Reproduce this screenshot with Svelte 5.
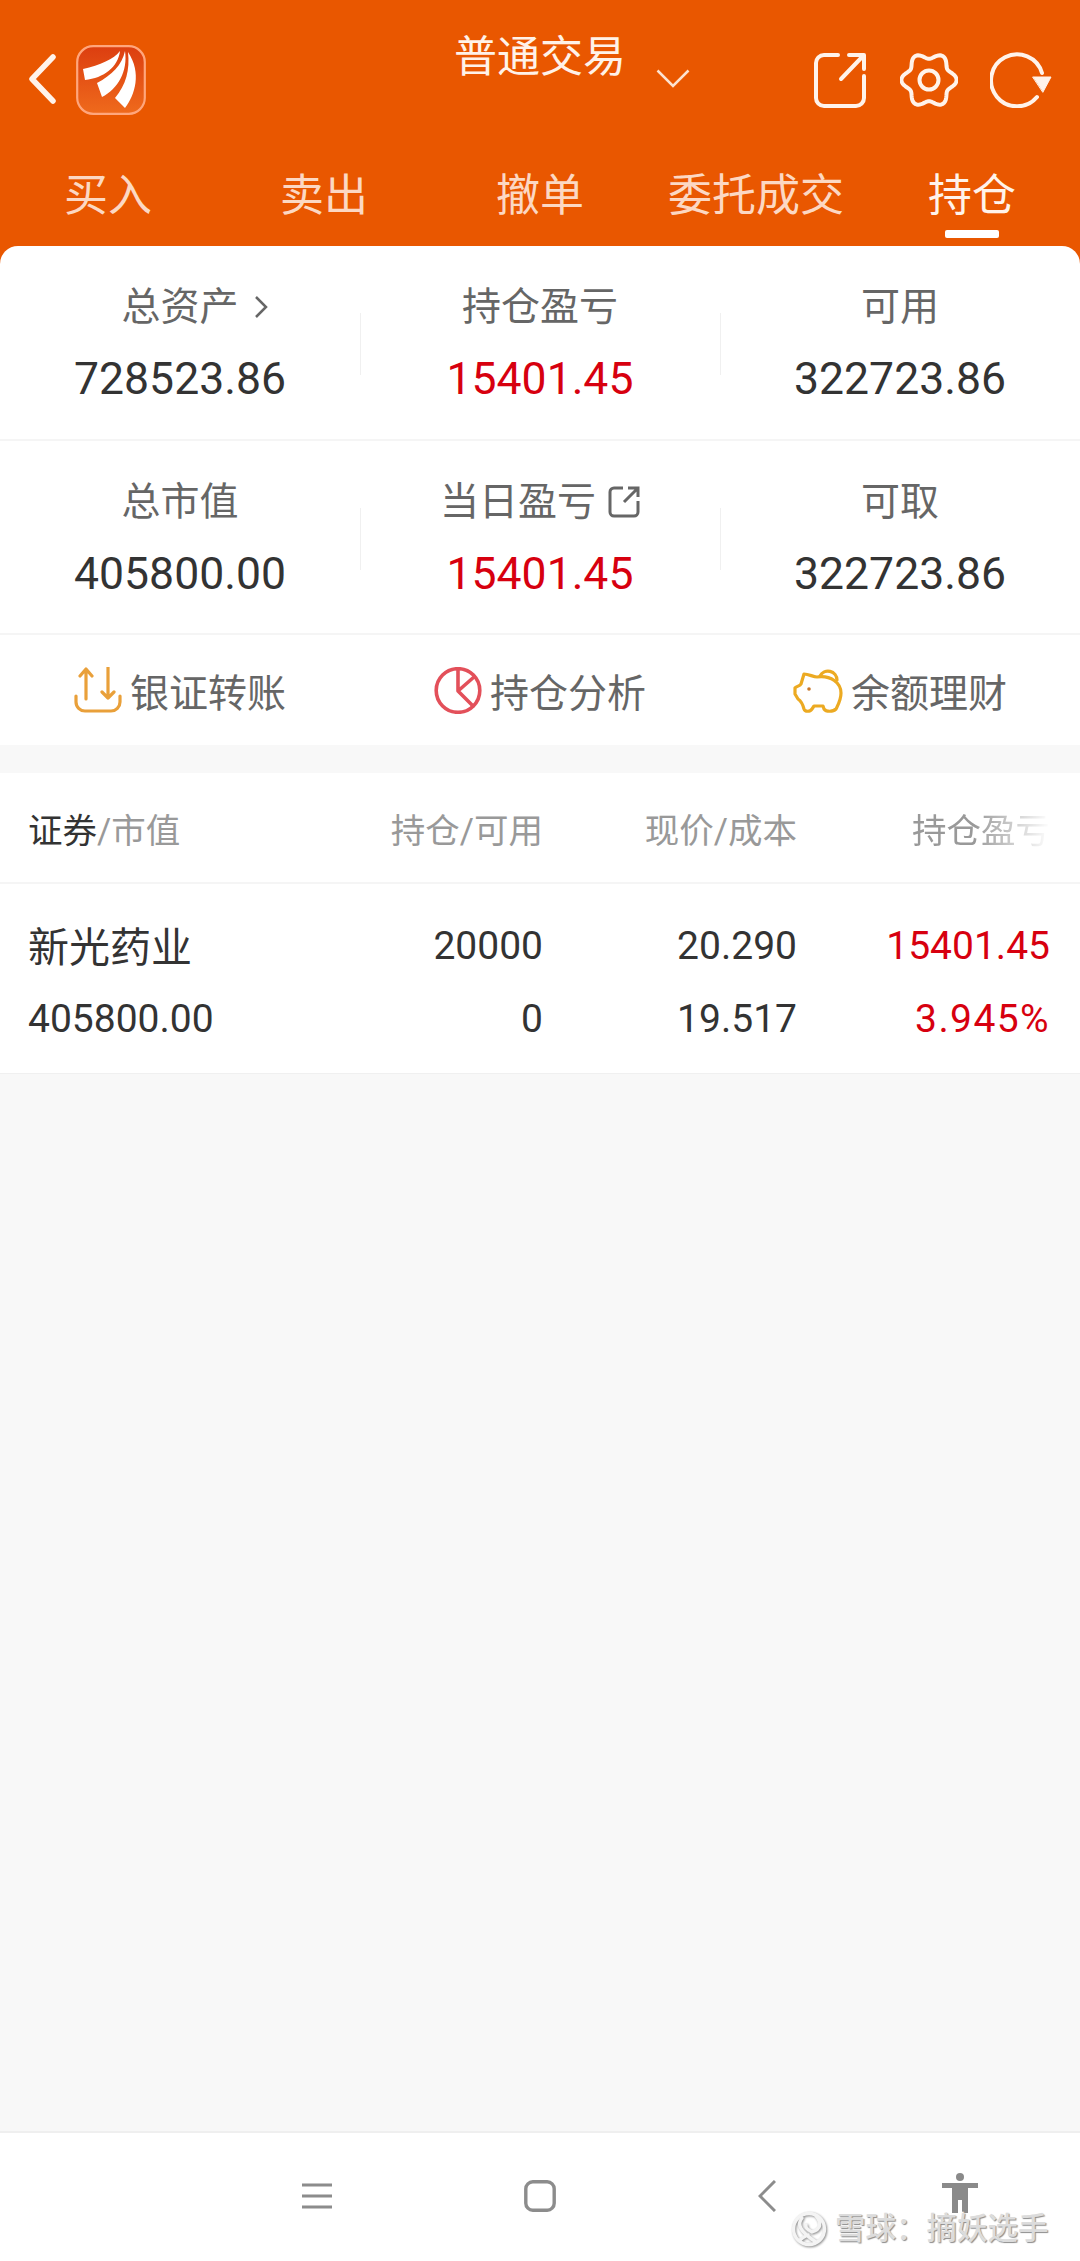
<script>
	const tabs = ['买入', '卖出', '撤单', '委托成交', '持仓'];
	const summary = [
		[
			{ label: '总资产', value: '728523.86', more: true },
			{ label: '持仓盈亏', value: '15401.45', red: true },
			{ label: '可用', value: '322723.86' }
		],
		[
			{ label: '总市值', value: '405800.00' },
			{ label: '当日盈亏', value: '15401.45', red: true, link: true },
			{ label: '可取', value: '322723.86' }
		]
	];

	// wavy six-lobed outline of the settings icon
	function gearPath(cx, cy) {
		let d = '';
		for (let i = 0; i < 120; i++) {
			const a = (i / 120) * Math.PI * 2;
			const r = 24.4 + 3.2 * Math.cos(6 * a);
			d += `${i ? 'L' : 'M'}${(cx + r * Math.cos(a)).toFixed(2)} ${(cy + r * Math.sin(a)).toFixed(2)}`;
		}
		return d + 'Z';
	}
</script>

<div class="page">
	<header class="top">
		<div class="bar">
			<div class="bar-left">
				<svg class="back" width="28" height="50" viewBox="0 0 28 50">
					<path d="M25 3 L4 25 L25 47" />
				</svg>
				<svg class="logo" width="70" height="70" viewBox="0 0 70 70">
					<defs>
						<linearGradient id="logoBg" x1="0" y1="0" x2="0" y2="1">
							<stop offset="0" stop-color="#dc3e10" />
							<stop offset="1" stop-color="#ef6a1c" />
						</linearGradient>
					</defs>
					<rect x="1.2" y="1.2" width="67.6" height="67.6" rx="16" fill="url(#logoBg)" stroke="#ffa67c" stroke-width="2.2" />
					<path fill="#fff" d="M44 6 C38 14 24 20 7 24 L9 35 C28 33 42 22 44 6Z" />
					<path fill="#fff" d="M49 6 C46 20 36 30 21 38 L26 52 C42 44 52 26 49 6Z" />
					<path fill="#fff" d="M52 7 C54 25 50 40 39 53 L49 63 C59 50 66 28 52 7Z" />
				</svg>
			</div>
			<div class="title">普通交易</div>
			<div class="bar-right">
				<svg class="caret" width="34" height="19" viewBox="0 0 34 19">
					<path d="M1.5 1.5 L17 17 L32.5 1.5" />
				</svg>
				<div class="tools">
					<svg width="52" height="56" viewBox="0 0 52 56">
						<path d="M24 3 H10 a8 8 0 0 0 -8 8 V46 a8 8 0 0 0 8 8 H42 a8 8 0 0 0 8 -8 V24" />
						<path d="M27 27 L49 4 M35 3 H50 V17" />
					</svg>
					<svg width="58" height="56" viewBox="0 0 58 56">
						<path d={gearPath(29, 28)} />
						<circle cx="29" cy="28" r="9.5" />
					</svg>
					<svg class="refresh" width="62" height="56" viewBox="0 0 62 56">
						<path d="M47 45 A26 26 0 1 1 52 21" />
						<path class="solid" d="M43 25 H61 L53 40Z" />
					</svg>
				</div>
			</div>
		</div>
		<nav class="tabs">
			{#each tabs as tab, i}
				<div class="tab" class:active={i === 4}>{tab}</div>
			{/each}
		</nav>
	</header>

	<section class="card">
		{#each summary as row}
			<div class="stats">
				{#each row as cell}
					<div class="stat">
						<div class="stat-label">
							{cell.label}
							{#if cell.more}
								<svg class="more" width="14" height="24" viewBox="0 0 14 24">
									<path d="M2 2 L12 12 L2 22" />
								</svg>
							{/if}
							{#if cell.link}
								<svg class="link" width="32" height="32" viewBox="0 0 32 32">
									<path d="M15 2 H6 a4 4 0 0 0 -4 4 V26 a4 4 0 0 0 4 4 H26 a4 4 0 0 0 4 -4 V15" />
									<path d="M16 16 L29 3 M20 2 H30 V11" />
								</svg>
							{/if}
						</div>
						<div class="stat-value" class:red={cell.red}>{cell.value}</div>
					</div>
				{/each}
			</div>
		{/each}

		<div class="actions">
			<div class="action">
				<svg width="48" height="46" viewBox="0 0 48 46">
					<path class="amber" d="M12 32 V2 M6 9 L12 2 L18 9" />
					<path class="amber" d="M34 0 V31 M28 25 L34 31 L40 25" />
					<path class="amber" d="M2 29 V35 a9 9 0 0 0 9 9 H37 a9 9 0 0 0 9 -9 V29" />
				</svg>
				<span>银证转账</span>
			</div>
			<div class="action">
				<svg width="48" height="47" viewBox="0 0 48 47">
					<circle class="rose" cx="24" cy="23.5" r="21.8" />
					<path class="rose" d="M24 2 V24 L40 10 M24 24 L39 39" />
				</svg>
				<span>持仓分析</span>
			</div>
			<div class="action">
				<svg class="pig" width="50" height="56" viewBox="2 0 50 56">
					<path class="gold" d="M13 15 C18 15 22 18 26 18 C40 16 50 24 50 34 C50 41 47 46 45 50 C42 53 35 53 33 50 L32 47 H23 L21 50 C19 53 14 53 13 50 C12 46 10 42 7 40 L4 35 V29 C6 27 9 27 10 25Z" />
					<path class="gold" d="M29 17 A9 9 0 0 1 46 21" />
					<circle class="eye" cx="18" cy="30" r="1.8" />
				</svg>
				<span>余额理财</span>
			</div>
		</div>
	</section>

	<section class="table">
		<div class="grid head">
			<div class="left"><b>证券</b>/市值</div>
			<div>持仓/可用</div>
			<div>现价/成本</div>
			<div class="fade">持仓盈亏</div>
		</div>
		<div class="grid line">
			<div class="left name">新光药业</div>
			<div>20000</div>
			<div>20.290</div>
			<div class="red">15401.45</div>
			<div class="left">405800.00</div>
			<div>0</div>
			<div>19.517</div>
			<div class="red pct">3.945%</div>
		</div>
	</section>

	<div class="filler"></div>

	<footer class="sysbar">
		<svg class="s-menu" width="30" height="26" viewBox="0 0 30 26">
			<path d="M0 2 H30 M0 13 H30 M0 24 H30" />
		</svg>
		<svg class="s-home" width="32" height="32" viewBox="0 0 32 32">
			<rect x="1.8" y="1.8" width="28.4" height="28.4" rx="7" />
		</svg>
		<svg class="s-back" width="18" height="32" viewBox="0 0 18 32">
			<path d="M17 1 L2 16 L17 31" />
		</svg>
		<svg class="s-access" width="36" height="40" viewBox="0 0 36 40">
			<circle cx="18" cy="4" r="4" />
			<path d="M0 10 H36 V15 H26 V40 H20 V27 H16 V40 H10 V15 H0Z" />
		</svg>

		<div class="mark">
			<svg width="36" height="36" viewBox="0 0 36 36">
				<circle cx="18" cy="18" r="15.5" />
				<path d="M11 7 C6 13 8 20 25 31 M25 5 C31 12 30 18 21 21 C17 19 14 17 15 14 M9 29 C12 26 15 25 17 24" />
			</svg>
			<span>雪球：摘妖选手</span>
		</div>
	</footer>
</div>

<style>
	:global(body) {
		margin: 0;
		background: #f8f8f8;
	}

	.page {
		width: 1080px;
		height: 2261px;
		display: flex;
		flex-direction: column;
		overflow: hidden;
		font-family: Roboto, 'Noto Sans CJK SC', sans-serif;
		background: #f8f8f8;
	}

	svg {
		display: block;
		flex-shrink: 0;
		fill: none;
	}

	/* Orange header */
	.top {
		background: #e95700;
		height: 264px;
		margin-bottom: -18px;
		flex-shrink: 0;
		color: #fff;
	}

	.bar {
		display: grid;
		grid-template-columns: 454px 172px 1fr;
		height: 151px;
	}

	.bar-left {
		display: flex;
		align-items: flex-start;
		gap: 20px;
		padding: 45px 0 0 28px;
	}

	.back {
		margin-top: 9px;
	}

	.back path {
		stroke: #fff3ea;
		stroke-width: 5.5;
		stroke-linecap: round;
		stroke-linejoin: round;
	}

	.title {
		font-size: 43px;
		line-height: 60px;
		padding-top: 27px;
		white-space: nowrap;
		color: #fff2e8;
	}

	.bar-right {
		display: flex;
		align-items: flex-start;
		padding-right: 28px;
	}

	.caret {
		margin: 69px 0 0 30px;
	}

	.caret path {
		stroke: #fde2d0;
		stroke-width: 2.5;
	}

	.tools {
		display: flex;
		gap: 34px;
		margin: 52px 0 0 auto;
	}

	.tools .refresh {
		margin-left: -2px;
	}

	.tools path,
	.tools circle {
		stroke: #fff3ea;
		stroke-width: 4;
		stroke-linecap: round;
		stroke-linejoin: round;
	}

	.tools .solid {
		fill: #fff3ea;
		stroke-width: 1;
	}

	.tabs {
		display: grid;
		grid-template-columns: repeat(5, 216px);
	}

	.tab {
		position: relative;
		text-align: center;
		font-size: 44px;
		line-height: 90px;
		color: #fcd8c3;
	}

	.tab.active {
		color: #fff3ea;
	}

	.tab.active::after {
		content: '';
		position: absolute;
		left: 81px;
		top: 79px;
		width: 54px;
		height: 8px;
		border-radius: 2px;
		background: #fff;
	}

	/* Summary card */
	.card {
		position: relative;
		background: #fff;
		border-radius: 18px 18px 0 0;
		flex-shrink: 0;
	}

	.stats {
		display: grid;
		grid-template-columns: repeat(3, 360px);
		height: 195px;
		box-sizing: border-box;
		border-bottom: 2px solid #f5f5f5;
	}

	.stats:nth-child(2) {
		height: 194px;
	}

	.stat {
		position: relative;
		display: flex;
		flex-direction: column;
		align-items: center;
		padding-top: 33px;
	}

	.stat + .stat::before {
		content: '';
		position: absolute;
		left: 0;
		top: 67px;
		height: 62px;
		width: 1px;
		background: #f0f0f0;
	}

	.stat-label {
		display: flex;
		align-items: center;
		font-size: 39px;
		line-height: 56px;
		color: #666;
	}

	.stat-value {
		font-size: 44.5px;
		line-height: 52px;
		margin-top: 18px;
		color: #333;
	}

	.red {
		color: #d7000f;
	}

	.stat-value.red {
		color: #d7000f;
	}

	.more {
		margin: 0 -29px 0 15px;
	}

	.more path {
		stroke: #666;
		stroke-width: 2.5;
	}

	.link {
		margin-left: 12px;
	}

	.link path {
		stroke: #666;
		stroke-width: 3;
	}

	.actions {
		display: grid;
		grid-template-columns: repeat(3, 360px);
		height: 110px;
		align-items: center;
	}

	.action {
		display: flex;
		align-items: center;
		justify-content: center;
		gap: 8px;
		font-size: 39px;
		color: #666;
	}

	.pig {
		margin-bottom: 6px;
	}

	.amber {
		stroke: #e9a03a;
		stroke-width: 3.2;
		stroke-linecap: round;
		stroke-linejoin: round;
	}

	.rose {
		stroke: #e3505a;
		stroke-width: 3.6;
		stroke-linecap: round;
		stroke-linejoin: round;
	}

	.gold {
		stroke: #ecaa22;
		stroke-width: 3.2;
		stroke-linejoin: round;
		stroke-linecap: round;
	}

	.eye {
		fill: #c9772a;
	}

	/* Positions table */
	.table {
		margin-top: 28px;
		background: #fff;
		flex-shrink: 0;
		border-bottom: 1px solid #f0f0f0;
	}

	.grid {
		display: grid;
		grid-template-columns: 300px 215px 254px 253px;
		padding: 0 30px 0 28px;
		text-align: right;
	}

	.head {
		height: 111px;
		box-sizing: border-box;
		align-items: center;
		font-size: 34.5px;
		color: #999;
		border-bottom: 2px solid #f5f5f5;
	}

	.head b {
		font-weight: 400;
		color: #333;
	}

	.fade {
		-webkit-mask-image: linear-gradient(to right, #000 70%, transparent 100%);
		mask-image: linear-gradient(to right, #000 70%, transparent 100%);
	}

	.line {
		grid-auto-rows: 73px;
		padding-top: 25px;
		padding-bottom: 18px;
		align-items: center;
		font-size: 39px;
		color: #333;
	}

	.left {
		text-align: left;
	}

	.name {
		font-size: 41px;
		margin-top: -4px;
	}

	.pct {
		letter-spacing: 1.4px;
	}

	.filler {
		flex: 1;
	}

	/* System bar */
	.sysbar {
		position: relative;
		height: 130px;
		flex-shrink: 0;
		box-sizing: border-box;
		border-top: 2px solid #efefef;
		background: #fff;
		display: flex;
		align-items: flex-start;
	}

	.s-menu {
		margin: 50px 0 0 302px;
	}

	.s-menu path {
		stroke: #8c8c8c;
		stroke-width: 3.2;
	}

	.s-home {
		margin: 47px 0 0 192px;
	}

	.s-home rect {
		stroke: #8c8c8c;
		stroke-width: 3.4;
	}

	.s-back {
		margin: 47px 0 0 202px;
	}

	.s-back path {
		stroke: #8c8c8c;
		stroke-width: 3;
	}

	.s-access {
		margin: 40px 0 0 166px;
	}

	.s-access circle,
	.s-access path {
		fill: #8a8a8a;
	}

	.mark {
		position: absolute;
		left: 791px;
		top: 78px;
		display: flex;
		align-items: center;
		gap: 8px;
		font-size: 30.5px;
		font-weight: 500;
		line-height: 36px;
		white-space: nowrap;
		color: #dcdcdc;
		text-shadow: 1px 1px 1px #8c8c8c, -1px -1px 0 #fff;
	}

	.mark svg {
		filter: drop-shadow(1px 1px 1px #8c8c8c);
	}

	.mark circle,
	.mark path {
		stroke: #f4f4f4;
		stroke-width: 3.4;
		stroke-linecap: round;
	}
</style>
